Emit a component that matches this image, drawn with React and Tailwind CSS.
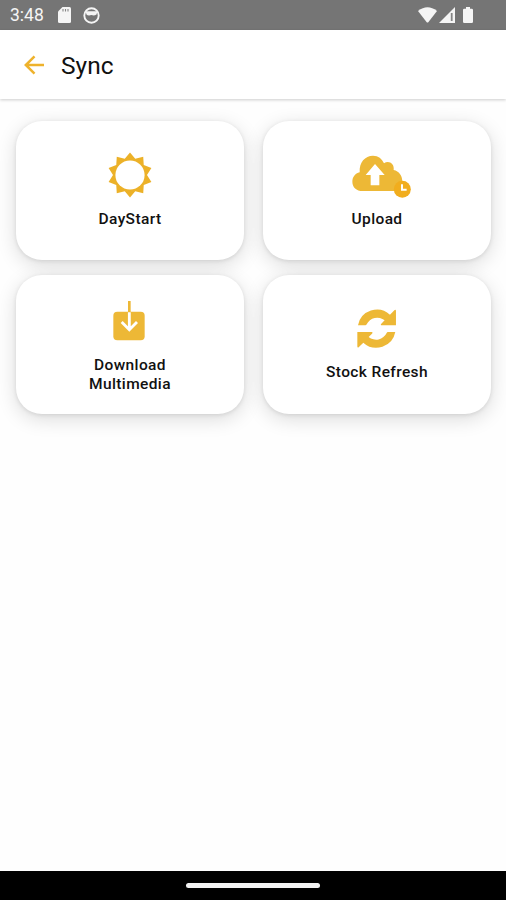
import React from "react";

const SUN_POINTS = Array.from({ length: 20 }, (_, i) => {
    const r = i % 2 === 0 ? 22.5 : 17;
    const a = (i * Math.PI) / 10;
    return `${(23 + r * Math.sin(a)).toFixed(2)},${(23 - r * Math.cos(a)).toFixed(2)}`;
}).join(" ");

function SunIcon() {
    return (
        <svg viewBox="0 0 46 46" className="w-[46px] h-[46px]">
            <polygon points={SUN_POINTS} fill="#ecb128" />
            <circle cx="23" cy="23" r="14.6" fill="#fff" />
        </svg>
    );
}

function CloudUploadIcon() {
    return (
        <svg viewBox="0 0 180 130" className="w-[60px] h-[43.3px]">
            <path
                d="M32 108C13 108 1 97 1 80C1 66 9 56 23 52C21 22 39 2 63 2C79 2 90 11 96 25C110 15 128 26 125 45C141 49 151 61 151 79C151 97 143 108 130 108Z"
                fill="#edb836"
            />
            <path d="M69 27L98 60H82V91H56V60H41Z" fill="#fff" />
            <circle cx="151" cy="103" r="25.5" fill="#f1ad1e" />
            <path d="M150 88V104H164" fill="none" stroke="#fff" strokeWidth="6" />
        </svg>
    );
}

function DownloadIcon() {
    return (
        <svg viewBox="0 0 96 120" className="w-8 h-10">
            <rect x="1" y="32" width="94" height="86" rx="12" fill="#edb836" />
            <path d="M49 0V36" stroke="#edb836" strokeWidth="8" />
            <path d="M49 34V84M26 63L49 86L72 63" fill="none" stroke="#fff" strokeWidth="8.5" />
        </svg>
    );
}

function RefreshIcon() {
    return (
        <svg viewBox="0 0 118 118" className="w-[39.3px] h-[39.3px]" fill="#edb836">
            <path d="M3 49A58 58 0 0 1 99 17L113 3Q117 1 117 6V49H73Q70 47 73 44L83 34A35 35 0 0 0 29 46Q28 49 25 49Z" />
            <path d="M115 69A58 58 0 0 1 19 101L5 115Q1 117 1 112V69H45Q48 71 45 74L35 84A35 35 0 0 0 89 72Q90 69 93 69Z" />
        </svg>
    );
}

function StatusBar() {
    return (
        <div className="h-[30px] shrink-0 bg-[#757575] flex items-center justify-between pl-2.5 pr-[33px] text-[#f5f5f5]">
            <div className="flex items-center">
                <span className="w-12 text-[17.5px] leading-none pt-0.5">3:48</span>
                <svg viewBox="0 0 13 16" className="w-[13px] h-4" fill="currentColor">
                    <path d="M4.5 0H11.5Q13 0 13 1.5V14.5Q13 16 11.5 16H1.5Q0 16 0 14.5V4.5Z" />
                    <path d="M5 2V4.5M7.5 2V4.5M10 2V4.5" stroke="#858585" strokeWidth="1.1" />
                </svg>
                <svg viewBox="0 0 17 17" className="w-[17px] h-[17px] ml-3" fill="none" stroke="currentColor">
                    <circle cx="8.5" cy="8.5" r="7.2" strokeWidth="1.9" />
                    <path d="M2.5 4.3H14.5L13.5 7.5Q11 9 8.5 8Q5 9 3.5 7.5Z" fill="currentColor" stroke="none" />
                </svg>
            </div>
            <div className="flex items-center">
                <svg viewBox="0 0 19 16" className="w-[19px] h-4" fill="currentColor">
                    <path d="M0 4Q9.5 -3.5 19 4L10.5 15Q9.5 16 8.5 15Z" />
                </svg>
                <svg viewBox="0 0 16 16" className="w-4 h-4 ml-0.5">
                    <path d="M16 0V16H0Z" fill="currentColor" />
                    <path d="M12.7 6V14" stroke="#858585" strokeWidth="1.8" />
                </svg>
                <svg viewBox="0 0 10 16" className="w-2.5 h-4 ml-2" fill="currentColor">
                    <path d="M3 0H7V1.7H8.7Q10 1.7 10 3V14.7Q10 16 8.7 16H1.3Q0 16 0 14.7V3Q0 1.7 1.3 1.7H3Z" />
                </svg>
            </div>
        </div>
    );
}

function SyncCard({ children, label, className }) {
    return (
        <button
            type="button"
            className={`flex flex-col items-center rounded-[26px] bg-white shadow-[0_5px_20px_rgba(0,0,0,0.14),0_1px_4px_rgba(0,0,0,0.10)] ${className}`}
        >
            {children}
            <span className="whitespace-pre-line text-center text-[15.5px] leading-[19px] font-medium tracking-[0.38px] text-[#111]">
                {label}
            </span>
        </button>
    );
}

export default function App() {
    return (
        <div className="h-screen flex flex-col bg-[#fefefe] font-['Roboto',sans-serif]">
            <StatusBar />
            <header className="h-[69px] shrink-0 flex items-center pl-6 bg-white shadow-[0_1px_3px_rgba(0,0,0,0.2)]">
                <svg viewBox="0 0 21 20" className="w-[21px] h-5" fill="none" stroke="#eeb22c" strokeWidth="2.5">
                    <path d="M20 10H2M10.5 1.3L1.8 10L10.5 18.7" />
                </svg>
                <h1 className="ml-4 pt-[3px] text-[24.5px] leading-none text-[#111]">Sync</h1>
            </header>

            <main className="flex-1 grid grid-cols-[228px_228px] auto-rows-[139px] content-start gap-x-[19px] gap-y-[15px] pl-4 pt-[21.5px]">
                <SyncCard label="DayStart" className="pt-[31.5px] gap-3">
                    <SunIcon />
                </SyncCard>
                <SyncCard label="Upload" className="pt-[34.5px] gap-3">
                    <div className="pl-2.5">
                        <CloudUploadIcon />
                    </div>
                </SyncCard>
                <SyncCard label={"Download\nMultimedia"} className="pt-[26px] gap-[15px]">
                    <div className="pr-[3px]">
                        <DownloadIcon />
                    </div>
                </SyncCard>
                <SyncCard label="Stock Refresh" className="pt-[34.5px] gap-[15px]">
                    <RefreshIcon />
                </SyncCard>
            </main>

            <footer className="h-[29px] shrink-0 bg-black flex items-center justify-center">
                <div className="w-[134px] h-[5px] rounded-full bg-[#f2f2f2]" />
            </footer>
        </div>
    );
}
